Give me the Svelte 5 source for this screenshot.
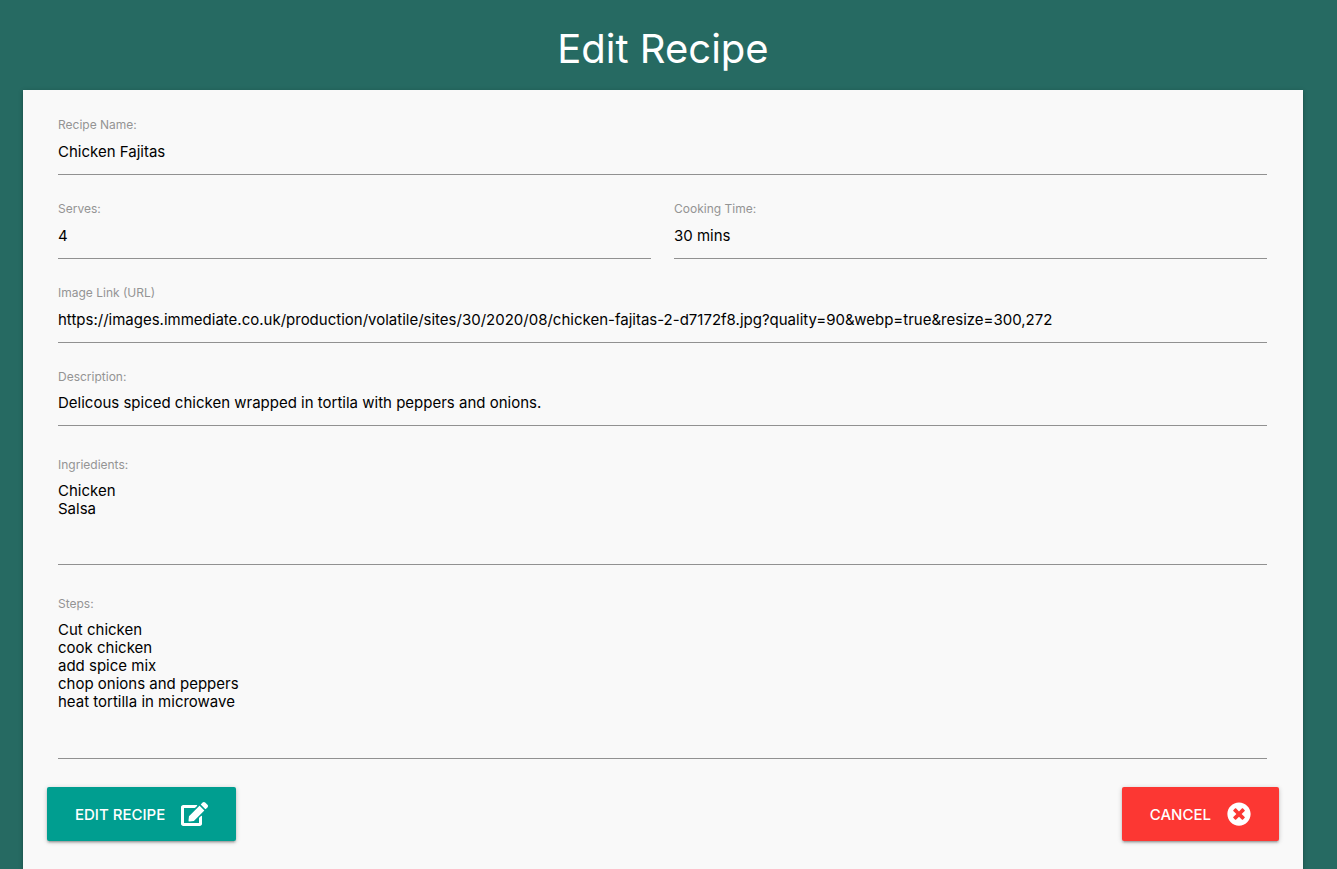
<script>
  let recipe = $state({
    name: 'Chicken Fajitas',
    serves: '4',
    time: '30 mins',
    image: 'https://images.immediate.co.uk/production/volatile/sites/30/2020/08/chicken-fajitas-2-d7172f8.jpg?quality=90&webp=true&resize=300,272',
    description: 'Delicous spiced chicken wrapped in tortila with peppers and onions.',
    ingredients: 'Chicken\nSalsa',
    steps: 'Cut chicken\ncook chicken\nadd spice mix\nchop onions and peppers\nheat tortilla in microwave'
  });
</script>

<main>
  <h1>Edit Recipe</h1>
  <form onsubmit={(e) => e.preventDefault()}>
    <div class="fields">
      <div class="field">
        <label for="name">Recipe Name:</label>
        <input id="name" type="text" bind:value={recipe.name} />
      </div>
      <div class="pair">
        <div class="field">
          <label for="serves">Serves:</label>
          <input id="serves" type="text" bind:value={recipe.serves} />
        </div>
        <div class="field">
          <label for="time">Cooking Time:</label>
          <input id="time" type="text" bind:value={recipe.time} />
        </div>
      </div>
      <div class="field">
        <label for="image">Image Link (URL)</label>
        <input id="image" type="text" bind:value={recipe.image} />
      </div>
      <div class="field">
        <label for="description">Description:</label>
        <textarea id="description" rows="1" bind:value={recipe.description}></textarea>
      </div>
      <div class="field area">
        <label for="ingredients">Ingriedients:</label>
        <textarea id="ingredients" class="medium" bind:value={recipe.ingredients}></textarea>
      </div>
      <div class="field area">
        <label for="steps">Steps:</label>
        <textarea id="steps" class="tall" bind:value={recipe.steps}></textarea>
      </div>
    </div>
    <div class="actions">
      <button class="save" type="submit">
        Edit Recipe
        <svg width="27" height="24" viewBox="0 0 576 512" fill="currentColor" aria-hidden="true">
          <path d="M402.600 83.200l90.200 90.200c3.800 3.800 3.800 10 0 13.800L274.400 405.600l-92.800 10.300c-12.400 1.400-22.900-9.100-21.500-21.500l10.300-92.800L388.800 83.200c3.800-3.800 10-3.800 13.800 0zm162-22.900l-48.800-48.800c-15.200-15.200-39.900-15.200-55.200 0l-35.400 35.400c-3.800 3.800-3.800 10 0 13.800l90.200 90.200c3.800 3.800 10 3.800 13.800 0l35.400-35.400c15.200-15.300 15.200-40 0-55.200zM384 346.200V448H64V128h229.800c3.200 0 6.200-1.300 8.500-3.500l40-40c7.600-7.600 2.200-20.500-8.500-20.500H48C21.500 64 0 85.500 0 112v352c0 26.500 21.500 48 48 48h352c26.500 0 48-21.500 48-48V306.200c0-10.700-12.900-16-20.500-8.500l-40 40c-2.200 2.300-3.500 5.300-3.500 8.500z" />
        </svg>
      </button>
      <button class="cancel" type="button">
        Cancel
        <svg width="24" height="24" viewBox="0 0 512 512" fill="currentColor" aria-hidden="true">
          <path d="M256 8C119 8 8 119 8 256s111 248 248 248 248-111 248-248S393 8 256 8zm121.600 313.100c4.700 4.700 4.700 12.300 0 17L338 377.600c-4.700 4.700-12.300 4.700-17 0L256 312l-65.100 65.600c-4.700 4.700-12.300 4.700-17 0L134.400 338c-4.700-4.700-4.700-12.300 0-17l65.600-65-65.600-65.100c-4.700-4.700-4.700-12.300 0-17l39.600-39.600c4.700-4.700 12.300-4.700 17 0l65 65.700 65.100-65.600c4.700-4.700 12.300-4.700 17 0l39.600 39.600c4.700 4.700 4.700 12.300 0 17L312 256l65.600 65.100z" />
        </svg>
      </button>
    </div>
  </form>
</main>

<style>
  :global(body) {
    background: #266a62;
    font-family: Inter, "Liberation Sans", sans-serif;
  }
  main {
    padding: 20px 34px 0 23px;
  }
  h1 {
    margin: 0;
    color: #fff;
    font-size: 40px;
    font-weight: 400;
    line-height: 58px;
    text-align: center;
  }
  form {
    margin-top: 12px;
    padding: 24px 24px 40px;
    background: #f9f9f9;
    box-shadow: 0 2px 2px rgba(0, 0, 0, 0.14), 0 1px 5px rgba(0, 0, 0, 0.2);
  }
  .fields {
    display: flex;
    flex-direction: column;
    gap: 23px;
    padding: 0 12px 0 11px;
  }
  .pair {
    display: grid;
    grid-template-columns: 1fr 1fr;
    gap: 23px;
  }
  .field {
    display: flex;
    flex-direction: column;
  }
  .area {
    margin-top: 5px;
  }
  label {
    color: #949494;
    font-size: 12px;
    line-height: 22px;
  }
  input,
  textarea {
    box-sizing: border-box;
    width: 100%;
    height: 39px;
    margin: 0;
    padding: 0 0 8px;
    border: 0;
    border-bottom: 1px solid #919191;
    border-radius: 0;
    outline: 0;
    background: transparent;
    color: #000;
    font-family: inherit;
    font-size: 15px;
    line-height: 18px;
  }
  textarea {
    display: block;
    height: 38px;
    padding: 6px 0 0;
    overflow: hidden;
    resize: none;
  }
  .medium {
    height: 89px;
  }
  .tall {
    height: 144px;
  }
  .actions {
    display: flex;
    justify-content: space-between;
    margin-top: 28px;
  }
  button {
    display: flex;
    align-items: center;
    gap: 16px;
    height: 54px;
    padding: 0 28px;
    border: 0;
    border-radius: 2px;
    color: #fff;
    font-family: inherit;
    font-size: 15px;
    font-weight: 500;
    text-transform: uppercase;
    cursor: pointer;
    box-shadow: 0 2px 2px rgba(0, 0, 0, 0.14), 0 3px 1px -2px rgba(0, 0, 0, 0.12), 0 1px 5px rgba(0, 0, 0, 0.2);
  }
  .save {
    background: #009e90;
  }
  .cancel {
    background: #fc3733;
  }
</style>
